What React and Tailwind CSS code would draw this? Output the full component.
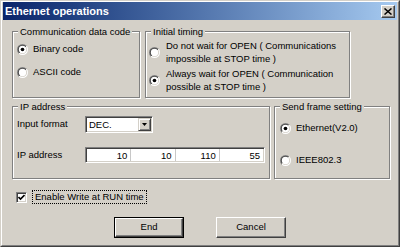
import React from "react";

function Radio({ checked }) {
  return (
    <svg width="11" height="11" viewBox="0 0 12 12" className="shrink-0">
      <defs>
        <linearGradient id="rdo" x1="0" y1="0" x2="1" y2="1">
          <stop offset="0.5" stopColor="#808080" />
          <stop offset="0.5" stopColor="#ffffff" />
        </linearGradient>
        <linearGradient id="rdi" x1="0" y1="0" x2="1" y2="1">
          <stop offset="0.5" stopColor="#404040" />
          <stop offset="0.5" stopColor="#d4d0c8" />
        </linearGradient>
      </defs>
      <circle cx="6" cy="6" r="6" fill="url(#rdo)" />
      <circle cx="6" cy="6" r="5" fill="url(#rdi)" />
      <circle cx="6" cy="6" r="4" fill="#ffffff" />
      {checked && <circle cx="6" cy="6" r="2" fill="#000000" />}
    </svg>
  );
}

function Checkbox() {
  return (
    <div className="w-[11px] h-[11px] shrink-0 border border-t-[#808080] border-l-[#808080] border-b-white border-r-white shadow-[inset_1px_1px_0_#404040,inset_-1px_-1px_0_#d4d0c8] bg-white flex items-center justify-center">
      <svg width="7" height="7" viewBox="0 0 7 7">
        <path d="M0.5 3 L2.5 5 L6.5 1" fill="none" stroke="#000" strokeWidth="1.6" />
      </svg>
    </div>
  );
}

function Group({ title, className, children }) {
  return (
    <fieldset
      className={
        "border border-[#808080] shadow-[inset_1px_1px_0_#fff,1px_1px_0_#fff] " +
        className
      }
    >
      <legend className="ml-[5px] px-[2px] bg-[#d4d0c8] leading-[11px]">{title}</legend>
      {children}
    </fieldset>
  );
}

export default function App() {
  return (
    <div className="w-[400px] h-[247px] bg-[#d4d0c8] border border-t-[#d4d0c8] border-l-[#d4d0c8] border-b-[#404040] border-r-[#404040] font-['Liberation_Sans',Arial,sans-serif] text-[9.5px] text-black">
      <div className="h-full border border-t-white border-l-white border-b-[#808080] border-r-[#808080] px-px pb-px flex flex-col">
        {/* Title bar */}
        <div className="h-[18px] shrink-0 flex items-center justify-between pl-[2px] pr-[2px] bg-gradient-to-r from-[#0a246a] to-[#a6caf0]">
          <span className="text-white font-bold text-[11px] leading-none">Ethernet operations</span>
          <div className="w-[14px] h-[13px] bg-[#d4d0c8] border border-t-white border-l-white border-b-[#404040] border-r-[#404040] shadow-[inset_-1px_-1px_0_#808080] flex items-center justify-center">
            <svg width="8" height="7" viewBox="0 0 8 7">
              <path d="M0.5 0.5 L7.5 6.5 M7.5 0.5 L0.5 6.5" stroke="#000" strokeWidth="1.5" />
            </svg>
          </div>
        </div>

        {/* Row 1 */}
        <div className="flex mt-[6px] ml-[9px]">
          <Group title="Communication data code" className="w-[128px] h-[72px]">
            <div className="flex flex-col pl-[4px] pt-[6px] gap-[11px]">
              <div className="flex items-center gap-[5px] h-[12px] leading-[12px]">
                <Radio checked />
                <span>Binary code</span>
              </div>
              <div className="flex items-center gap-[5px] h-[12px] leading-[12px]">
                <Radio />
                <span>ASCII code</span>
              </div>
            </div>
          </Group>
          <Group title="Initial timing" className="ml-[5px] w-[205px] h-[72px]">
            <div className="flex flex-col pl-[3px] pt-[3px] gap-[3px]">
              <div className="flex items-center gap-[6px] leading-[12.5px]">
                <Radio />
                <span>
                  Do not wait for OPEN ( Communications
                  <br />
                  impossible at STOP time )
                </span>
              </div>
              <div className="flex items-center gap-[6px] leading-[12.5px]">
                <Radio checked />
                <span>
                  Always wait for OPEN ( Communication
                  <br />
                  possible at STOP time )
                </span>
              </div>
            </div>
          </Group>
        </div>

        {/* Row 2 */}
        <div className="flex mt-[3px] ml-[9px]">
          <Group title="IP address" className="w-[258px] h-[78px]">
            <div className="flex flex-col pl-[4px] pt-[4px]">
              <div className="flex items-center h-[17px]">
                <span className="w-[68px]">Input format</span>
                <div className="w-[68px] h-[17px] bg-white border border-t-[#808080] border-l-[#808080] border-b-white border-r-white shadow-[inset_1px_1px_0_#404040,inset_-1px_-1px_0_#d4d0c8] p-px flex items-center">
                  <span className="flex-1 pl-[2px] leading-[12px]">DEC.</span>
                  <div className="w-[13px] h-[13px] bg-[#d4d0c8] border border-t-[#d4d0c8] border-l-[#d4d0c8] border-b-[#404040] border-r-[#404040] shadow-[inset_1px_1px_0_#fff,inset_-1px_-1px_0_#808080] flex items-center justify-center">
                    <svg width="5" height="3" viewBox="0 0 5 3">
                      <path d="M0 0 H5 L2.5 3 Z" fill="#000" />
                    </svg>
                  </div>
                </div>
              </div>
              <div className="flex items-center h-[16px] mt-[14px]">
                <span className="w-[68px]">IP address</span>
                <div className="w-[180px] h-[16px] bg-white border border-t-[#808080] border-l-[#808080] border-b-white border-r-white shadow-[inset_1px_1px_0_#404040,inset_-1px_-1px_0_#d4d0c8] p-px flex">
                  <span className="flex-1 text-right pr-[3px] leading-[14px]">10</span>
                  <span className="flex-1 text-right pr-[3px] leading-[14px] border-l border-[#c8c8c8]">10</span>
                  <span className="flex-1 text-right pr-[3px] leading-[14px] border-l border-[#c8c8c8]">110</span>
                  <span className="flex-1 text-right pr-[3px] leading-[14px] border-l border-[#c8c8c8]">55</span>
                </div>
              </div>
            </div>
          </Group>
          <Group title="Send frame setting" className="ml-[4px] w-[116px] h-[78px]">
            <div className="flex flex-col pl-[5px] pt-[10px] gap-[20px]">
              <div className="flex items-center gap-[5px] h-[12px] leading-[12px]">
                <Radio checked />
                <span>Ethernet(V2.0)</span>
              </div>
              <div className="flex items-center gap-[5px] h-[12px] leading-[12px]">
                <Radio />
                <span>IEEE802.3</span>
              </div>
            </div>
          </Group>
        </div>

        {/* Checkbox */}
        <div className="flex items-center gap-[5px] mt-[11px] ml-[13px]">
          <Checkbox />
          <span className="border border-dotted border-black px-[2px] leading-[12px]">
            Enable Write at RUN time
          </span>
        </div>

        {/* Buttons */}
        <div className="flex justify-center gap-[32px] mt-[13px]">
          <div className="w-[70px] h-[21px] border border-black">
            <div className="h-full border border-t-white border-l-white border-b-[#404040] border-r-[#404040] shadow-[inset_-1px_-1px_0_#808080] flex items-center justify-center">
              End
            </div>
          </div>
          <div className="w-[70px] h-[21px] border border-t-white border-l-white border-b-[#404040] border-r-[#404040] shadow-[inset_-1px_-1px_0_#808080] flex items-center justify-center">
            Cancel
          </div>
        </div>
      </div>
    </div>
  );
}
